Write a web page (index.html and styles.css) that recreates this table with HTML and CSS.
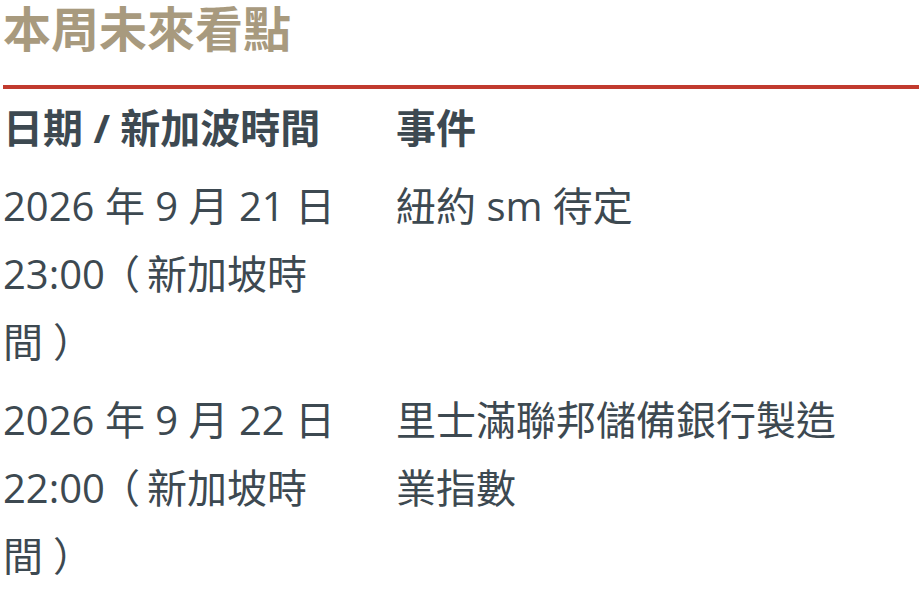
FILE: index.html
```html
<!DOCTYPE html>
<html lang="zh-Hant">
<head>
<meta charset="utf-8">
<title>本周未來看點</title>
<link rel="stylesheet" href="styles.css">
</head>
<body>
<section class="wrap">
  <h2 class="title">本周未來看點</h2>
  <div class="table">
    <div class="cell head">日期 / 新加波時間</div>
    <div class="cell head">事件</div>
    <div class="cell">2026 年 9 月 21 日 23:00<span class="po">（</span>新加坡時間<span class="pc">）</span></div>
    <div class="cell">紐約 sm 待定</div>
    <div class="cell">2026 年 9 月 22 日 22:00<span class="po">（</span>新加坡時間<span class="pc">）</span></div>
    <div class="cell">里士滿聯邦儲備銀行製造業指數</div>
  </div>
</section>
</body>
</html>
```
FILE: styles.css
```css
html, body {
  margin: 0;
  background: #ffffff;
}
body {
  font-family: "Open Sans", "Noto Sans CJK TC", sans-serif;
  color: #3d4951;
}
.wrap {
  margin-left: 3px;
}
.title {
  margin: 0;
  font-size: 48px;
  font-weight: 700;
  line-height: 58px;
  color: #a89a7e;
  padding-bottom: 27px;
  border-bottom: 4px solid #c13a2e;
}
.table {
  display: grid;
  grid-template-columns: 340px 460px;
  column-gap: 53px;
}
.cell {
  font-size: 40px;
  line-height: 68px;
  padding: 5px 0;
}
.head {
  font-weight: 700;
}
.po {
  margin-left: -5px;
  padding-right: 7px;
}
.pc {
  padding-left: 10px;
}
```
